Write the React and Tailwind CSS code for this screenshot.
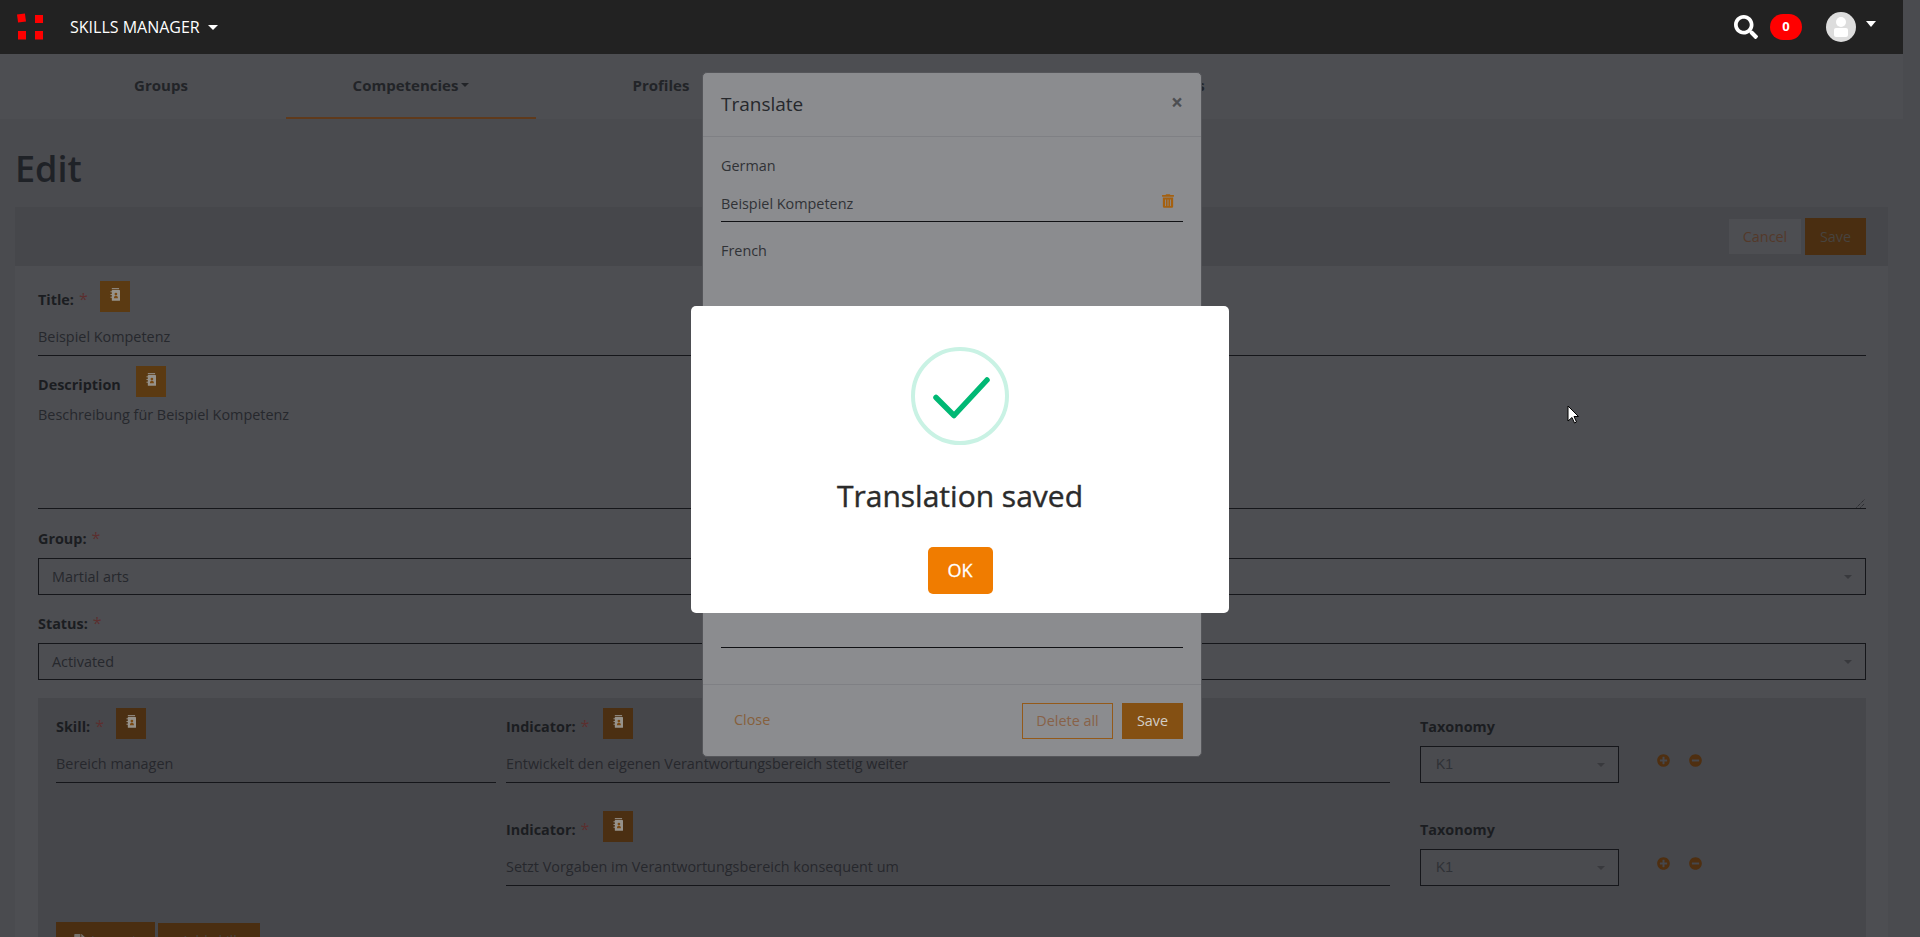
import React from "react";
import { FaSearch, FaTrashAlt, FaPlusCircle, FaMinusCircle, FaFile } from "react-icons/fa";

const Req = () => <span className="ml-[5px] text-[16px] font-normal leading-none text-[#5c2f2f]">*</span>;

function BookBtn({ left }) {
  return (
    <span className={`flex h-[31px] w-[30px] shrink-0 items-start justify-center pt-[7px] ${left}`}>
      <svg width="10" height="13" viewBox="0 0 11 14">
        <rect x="2" y="0" width="8" height="1.200" fill="#96928b" />
        <rect x="2" y="2" width="9" height="12" rx="0.6" fill="#96928b" />
        <path d="M0.5 4h2M0.5 7h2M0.5 10h2" stroke="#96928b" strokeWidth="1" />
        <circle cx="6.500" cy="6.500" r="1.500" fill="#7a4a14" />
        <path d="M4.300 11.200c0-2 1-2.700 2.200-2.700s2.200 0.700 2.200 2.700Z" fill="#7a4a14" />
      </svg>
    </span>
  );
}

function Caret({ className }) {
  return <span className={`h-0 w-0 border-x-[4px] border-t-[4px] border-x-transparent ${className}`} />;
}

function Line({ children }) {
  return (
    <div className="border-b border-[#15161a] pb-[8px] pt-[14px] leading-[21px] text-[#26282d]">{children}</div>
  );
}

function FullSelect({ children }) {
  return (
    <div className="flex h-[37px] items-center justify-between border border-[#15161a] pl-[13px] pr-[13px] text-[#26282d]">
      <span>{children}</span>
      <span className="h-0 w-0 border-x-[4px] border-t-[4px] border-x-transparent border-t-[#38393d]" />
    </div>
  );
}

function Row({ indicator, mt, skill }) {
  return (
    <div className={`flex items-start ${mt}`}>
      <div className="w-[440px]">
        {skill && (
          <>
            <div className="flex h-[31px] items-center">
              <span className="w-[60px] pt-[7px] font-bold text-[#1b1d21]">Skill:<Req /></span>
              <BookBtn left="bg-[#4b2f12]" />
            </div>
            <Line>Bereich managen</Line>
          </>
        )}
      </div>
      <div className="ml-[10px] w-[884px]">
        <div className="flex h-[31px] items-center">
          <span className="w-[97px] pt-[7px] font-bold text-[#1b1d21]">Indicator:<Req /></span>
          <BookBtn left="bg-[#4b2f12]" />
        </div>
        <Line>{indicator}</Line>
      </div>
      <div className="ml-[30px] w-[199px]">
        <div className="pt-[8px] font-bold leading-[21px] text-[#1b1d21]">Taxonomy</div>
        <div className="mt-[9px] flex h-[37px] items-center justify-between border border-[#15161a] bg-[#4a4b4f] pl-[15px] pr-[13px] font-['Liberation_Sans',sans-serif] text-[14px] text-[#2f3136]">
          <span>K1</span>
          <span className="h-0 w-0 border-x-[4px] border-t-[4px] border-x-transparent border-t-[#38393d]" />
        </div>
      </div>
      <div className="ml-[38px] flex gap-[19px] pt-[46px] text-[#4f2f10]">
        <FaPlusCircle className="h-[13px] w-[13px]" />
        <FaMinusCircle className="h-[13px] w-[13px]" />
      </div>
    </div>
  );
}

export default function App() {
  return (
    <div className="relative h-[937px] w-[1920px] overflow-hidden bg-[#4a4b4f] font-['Open_Sans',sans-serif] text-[14.4px] text-[#26282d]">
      <header className="flex h-[54px] w-[1903px] items-center bg-[#222222] text-white">
        <svg width="30" height="28" viewBox="0 0 30 28" className="ml-[15px]">
          <rect x="2.500" y="1" width="8" height="8" fill="#ff0000" transform="rotate(-8 6.500 5)" />
          <rect x="20" y="2" width="8" height="8" fill="#ff0000" />
          <rect x="3" y="18" width="8" height="8.500" fill="#ff0000" />
          <rect x="20" y="18" width="8" height="8.500" fill="#ff0000" />
        </svg>
        <span className="ml-[25px] text-[16px] leading-none">SKILLS MANAGER</span>
        <Caret className="ml-[8px] border-x-[5px] border-t-[5px] border-t-white" />
        <div className="ml-auto flex items-center">
          <FaSearch className="h-[24px] w-[24px]" />
          <span className="ml-[12px] flex h-[26px] w-[32px] items-center justify-center rounded-full bg-[#ff0000] text-[13px] font-bold">0</span>
          <svg width="30" height="30" viewBox="0 0 30 30" className="ml-[24px]">
            <circle cx="15" cy="15" r="15" fill="#dddddd" />
            <circle cx="15" cy="10" r="5" fill="#ffffff" />
            <rect x="8" y="16" width="14" height="9" rx="2" fill="#ffffff" />
          </svg>
          <Caret className="ml-[10px] mr-[27px] -translate-y-[3px] border-x-[5.500px] border-t-[6px] border-t-white" />
        </div>
      </header>

      <nav className="flex h-[65px] w-[1903px] bg-[#4d4e52] pl-[36px] text-[15px] font-bold text-[#222428]">
        <div className="flex w-[250px] items-center justify-center pb-[2px]">Groups</div>
        <div className="flex w-[250px] items-center justify-center border-b-2 border-[#5f3a1c]">
          Competencies
          <Caret className="ml-[3px] -translate-y-[1px] border-x-[4.500px] border-t-[4.500px] border-t-[#222428]" />
        </div>
        <div className="flex w-[250px] items-center justify-center pb-[2px]">Profiles</div>
        <div className="flex w-[250px] items-center justify-center pb-[2px]">Matrix</div>
        <div className="flex w-[250px] items-center justify-center pb-[2px]">Evaluations</div>
      </nav>

      <h1 className="pb-[17px] pl-[15px] pt-[28px] text-[36px] font-semibold leading-[43px] text-[#1f2227]">Edit</h1>

      <div className="mx-[15px] flex h-[59px] w-[1873px] items-center justify-end bg-[#46474b] pr-[22px]">
        <span className="flex h-[35px] w-[72px] items-center justify-center bg-[#4d4e52] text-[#54392a]">Cancel</span>
        <span className="ml-[4px] flex h-[37px] w-[61px] items-center justify-center bg-[#4a2e11] text-[#47433f]">Save</span>
      </div>

      <main className="mx-[15px] w-[1873px] bg-[#4d4e52] pb-[40px] pl-[23px] pr-[22px]">
        <div className="flex h-[46px] items-center pt-[15px]">
          <span className="w-[62px] pt-[7px] font-bold text-[#1b1d21]">Title:<Req /></span>
          <BookBtn left="bg-[#5b3a12]" />
        </div>
        <Line>Beispiel Kompetenz</Line>

        <div className="mt-[10px] flex h-[31px] items-center">
          <span className="w-[98px] pt-[7px] font-bold text-[#1b1d21]">Description</span>
          <BookBtn left="bg-[#5b3a12]" />
        </div>
        <div className="relative h-[112px] border-b border-[#15161a] pt-[7px] leading-[21px]">
          Beschreibung für Beispiel Kompetenz
          <svg width="9" height="9" viewBox="0 0 9 9" className="absolute bottom-[0px] right-[1px] stroke-[#1d1e22]">
            <path d="M0.500 8.500 8.500 0.500M4.500 8.500 8.500 4.500" fill="none" strokeDasharray="1 1" />
          </svg>
        </div>

        <div className="mt-[19px] font-bold leading-[21px] text-[#1b1d21]">Group:<Req /></div>
        <div className="mt-[9px]"><FullSelect>Martial arts</FullSelect></div>
        <div className="mt-[18px] font-bold leading-[21px] text-[#1b1d21]">Status:<Req /></div>
        <div className="mt-[9px]"><FullSelect>Activated</FullSelect></div>

        <section className="mt-[18px] bg-[#46474b] px-[18px] pt-[10px]">
          <Row skill indicator="Entwickelt den eigenen Verantwortungsbereich stetig weiter" />
          <Row mt="mt-[28px]" indicator="Setzt Vorgaben im Verantwortungsbereich konsequent um" />
          <div className="mt-[36px] flex items-start gap-[3px]">
            <span className="flex h-[37px] w-[99px] items-center justify-center gap-[6px] bg-[#4a2e11] text-[#47433f]">
              <FaFile className="h-[14px] w-[11px] text-[#77736d]" /> Import
            </span>
            <span className="mt-[1px] flex h-[36px] w-[102px] items-center justify-center bg-[#4a2e11] text-[#47433f]">Add skill</span>
          </div>
        </section>
      </main>

      {/* Translate dialog */}
      <div className="absolute left-[702px] top-[72px] h-[685px] w-[500px] rounded-[5px] border border-[#55565a] bg-[#8b8c8f] text-[#303236]">
        <div className="flex h-[64px] items-start justify-between border-b border-[#7f8084] pl-[18px] pr-[18px] pt-[19px]">
          <span className="text-[19px] leading-[24px] text-[#26282c]">Translate</span>
          <span className="mr-[0px] mt-[-4px] text-[21px] font-bold leading-[28px] text-[#4d4e52]">×</span>
        </div>
        <div className="px-[18px]">
          <div className="pt-[18px] leading-[21px]">German</div>
          <div className="relative mt-[7px] border-b border-[#101114] pb-[7px] pt-[10px] leading-[21px]">
            Beispiel Kompetenz
            <FaTrashAlt className="absolute right-[9px] top-[11px] h-[14px] w-[12px] text-[#a5600f]" />
          </div>
          <div className="mt-[18px] leading-[21px]">French</div>
          <div className="mt-[386px] border-b border-[#101114]" />
        </div>
        <div className="mt-[36px] flex items-start border-t border-[#7f8084] px-[18px] pt-[18px]">
          <span className="ml-[13px] mt-[6px] leading-[21px] text-[#86603c]">Close</span>
          <span className="ml-auto flex h-[36px] w-[91px] items-center justify-center border border-[#945a1a] text-[#886248]">Delete all</span>
          <span className="ml-[9px] flex h-[36px] w-[61px] items-center justify-center bg-[#845013] text-[#d2cdc6]">Save</span>
        </div>
      </div>

      {/* Success alert */}
      <div className="absolute left-[691px] top-[306px] flex h-[307px] w-[538px] flex-col items-center rounded-[5px] bg-white">
        <svg width="98" height="98" viewBox="0 0 98 98" className="mt-[41px]">
          <circle cx="49" cy="49" r="47" fill="none" stroke="#c9f2e4" strokeWidth="4" />
          <path d="M25 50.500 43 68.500 76 33" fill="none" stroke="#00b874" strokeWidth="5.500" strokeLinecap="round" strokeLinejoin="round" />
        </svg>
        <div className="mt-[31px] text-[30px] leading-[40px] text-[#2b2b2b] [-webkit-text-stroke:0.4px_#2b2b2b]">Translation saved</div>
        <span className="mt-[31px] flex h-[47px] w-[65px] items-center justify-center rounded-[5px] bg-[#f07c00] text-[18px] text-white [-webkit-text-stroke:0.3px_#ffffff]">OK</span>
      </div>

      {/* Pointer */}
      <svg width="12" height="19" viewBox="0 0 12 19" className="absolute left-[1567px] top-[405px]">
        <path d="M1 1v15l4-3.500 2.500 5.500 2-1-2.500-5.500H11.500Z" fill="#ffffff" stroke="#000000" strokeWidth="1" />
      </svg>
    </div>
  );
}
